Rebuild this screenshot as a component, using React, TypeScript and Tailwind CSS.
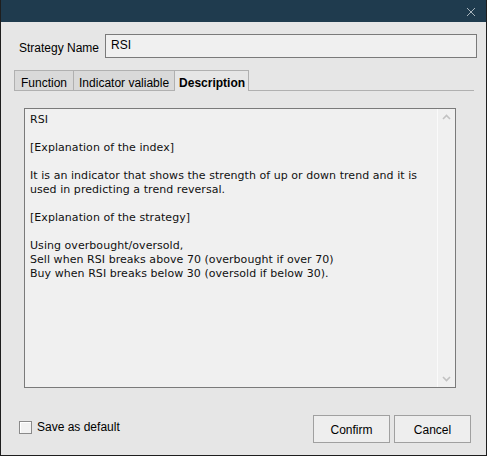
import React from "react";

const lines = [
  "RSI",
  "",
  "[Explanation of the index]",
  "",
  "It is an indicator that shows the strength of up or down trend and it is",
  "used in predicting a trend reversal.",
  "",
  "[Explanation of the strategy]",
  "",
  "Using overbought/oversold,",
  "Sell when RSI breaks above 70 (overbought if over 70)",
  "Buy when RSI breaks below 30 (oversold if below 30).",
];

export default function App() {
  return (
    <div
      className="w-[487px] h-[456px] flex flex-col bg-[#1e1e1e] px-px pb-px text-[12px] leading-[14px] text-black"
      style={{ fontFamily: '"Liberation Sans", Arial, sans-serif' }}
    >
      {/* title bar */}
      <div className="h-[22px] bg-[#1f3b4e] flex items-center justify-end pr-[10px] shrink-0">
        <svg width="10" height="10" viewBox="0 0 10 10" className="mt-[1px]">
          <path d="M1 1 L9 9 M9 1 L1 9" stroke="#a8b4bc" strokeWidth="1" />
        </svg>
      </div>

      {/* body */}
      <div className="flex-1 bg-[#e6e6e6] flex flex-col">
        {/* name row */}
        <div className="flex items-center mt-[12px] pl-[18px] pr-[9px]">
          <span className="w-[86px] pt-[4px]">Strategy Name</span>
          <div className="flex-1 h-[24px] border border-[#7a7a7a] bg-[#f0f0f0] pl-[5px] pt-[3px]">
            RSI
          </div>
        </div>

        {/* tabs */}
        <div className="flex mt-[13px] ml-[13px] mr-[12px] items-end h-[20px] border-b border-[#b0b0b0]">
          <div className="h-[20px] px-[6px] flex items-center bg-[#d9d9d9] border border-[#b0b0b0] border-b-0 pt-[4px]">
            Function
          </div>
          <div className="h-[20px] px-[5px] flex items-center bg-[#d9d9d9] border border-[#b0b0b0] border-l-0 border-b-0 pt-[4px]">
            Indicator valiable
          </div>
          <div className="h-[21px] -mb-px pl-[4px] pr-[3px] flex items-center bg-[#e6e6e6] border border-[#b0b0b0] border-l-0 border-b-0 font-bold pt-[4px]">
            Description
          </div>
        </div>

        {/* textarea */}
        <div className="mt-[17px] ml-[23px] w-[432px] h-[280px] border border-[#7a7a7a] bg-[#f0f0f0] flex">
          <div
            className="flex-1 pl-[5px] pt-[4px] text-[#101010] text-[11px] leading-[14px] tracking-[0.05px]"
            style={{ fontFamily: '"DejaVu Sans", Verdana, sans-serif' }}
          >
            {lines.map((l, i) => (
              <div key={i} className="h-[14px] whitespace-pre">
                {l}
              </div>
            ))}
          </div>
          <div className="w-[18px] border-l border-[#fafafa] bg-[#f0f0f0] flex flex-col items-center justify-between py-[5px]">
            <svg width="9" height="6" viewBox="0 0 9 6">
              <path d="M1 5 L4.5 1.5 L8 5" stroke="#c2c2c2" strokeWidth="1.6" fill="none" />
            </svg>
            <svg width="9" height="6" viewBox="0 0 9 6">
              <path d="M1 1 L4.5 4.5 L8 1" stroke="#c2c2c2" strokeWidth="1.6" fill="none" />
            </svg>
          </div>
        </div>

        {/* footer */}
        <div className="flex items-center mt-[27px] pl-[18px] pr-[15px]">
          <div className="flex items-center gap-[5px] -mt-[4px]">
            <div className="w-[13px] h-[13px] border border-[#8a8a8a] bg-[#f2f2f2] shadow-[inset_1px_1px_0_#ffffff]" />
            <span>Save as default</span>
          </div>
          <div className="flex-1" />
          <div className="flex gap-[4px]">
            <button className="w-[77px] h-[28px] border border-[#a0a0a0] bg-[#eeeeee] pt-[2px]">
              Confirm
            </button>
            <button className="w-[77px] h-[28px] border border-[#a0a0a0] bg-[#eeeeee] pt-[2px]">
              Cancel
            </button>
          </div>
        </div>
      </div>
    </div>
  );
}
